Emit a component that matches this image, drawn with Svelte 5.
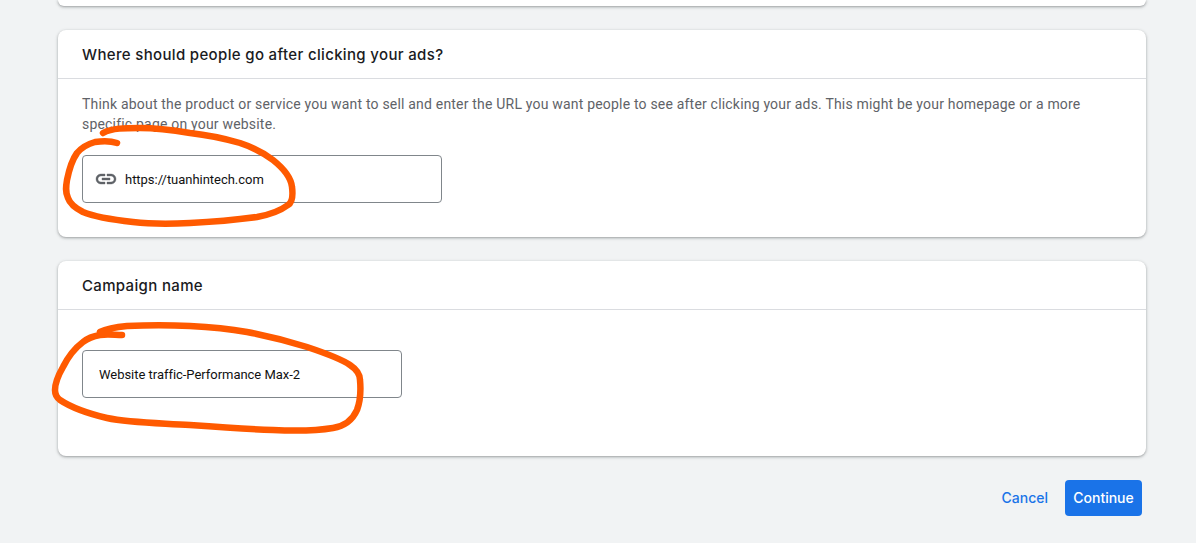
<script>
  let url = $state('https://tuanhintech.com');
  let campaign = $state('Website traffic-Performance Max-2');
</script>

<main class="page">
  <div class="card stub"></div>

  <section class="card">
    <h2>Where should people go after clicking your ads?</h2>
    <div class="body url-body">
      <p>Think about the product or service you want to sell and enter the URL you want people to see after clicking your ads. This might be your homepage or a more specific page on your website.</p>
      <label class="field url-field">
        <svg class="link-icon" viewBox="0 0 24 24" width="24" height="24" aria-hidden="true">
          <path d="M3.9 12c0-1.71 1.39-3.1 3.1-3.1h4V7H7c-2.76 0-5 2.24-5 5s2.24 5 5 5h4v-1.9H7c-1.71 0-3.1-1.39-3.1-3.1zM8 13h8v-2H8v2zm9-6h-4v1.9h4c1.71 0 3.1 1.39 3.1 3.1s-1.39 3.1-3.1 3.1h-4V17h4c2.76 0 5-2.24 5-5s-2.24-5-5-5z"/>
        </svg>
        <input bind:value={url} />
      </label>
    </div>
  </section>

  <section class="card">
    <h2>Campaign name</h2>
    <div class="body name-body">
      <label class="field name-field">
        <input bind:value={campaign} />
      </label>
    </div>
  </section>

  <div class="actions">
    <button class="cancel">Cancel</button>
    <button class="continue">Continue</button>
  </div>

  <!-- hand drawn marker circles on top of the form -->
  <svg class="marker" viewBox="0 0 1196 543" width="1196" height="543" aria-hidden="true">
    <path d="M103 133 C112 128 125 128 140 128 C158 128 172 130 190 133 C208 135 226 139 240 143 C252 147 264 153 273 160 C283 168 291 177 292 187 C293 195 293 202 288 205 C280 211 268 215 257 217 C235 220 212 222 190 223 C170 224 150 224 133 222 C115 220 95 217 83 212 C75 208 70 204 68 198 C65 192 66 186 67 180 C69 170 72 160 77 153 C82 147 88 144 95 142 C103 141 111 141 117 143"/>
    <path d="M100 332 C108 328 116 327 127 326 C148 325 170 325 190 326 C210 327 230 329 247 332 C268 336 288 341 307 347 C322 352 340 358 350 365 C356 369 360 374 360 380 C361 391 360 402 357 410 C353 419 345 426 333 428 C315 431 293 431 273 430 C245 429 217 427 190 425 C160 423 130 423 107 418 C90 414 72 408 60 400 C56 397 55 394 55 390 C55 382 59 374 63 367 C68 357 75 348 83 342 C88 338 94 336 100 335 C108 334 115 335 122 335"/>
  </svg>
</main>

<style>
  :global(body) {
    margin: 0;
    background: #f1f3f4;
    overflow: hidden;
  }

  .page {
    position: relative;
    width: 1196px;
    height: 543px;
    box-sizing: border-box;
    padding: 0 50px 0 58px;
    display: flex;
    flex-direction: column;
    gap: 24px;
    overflow: hidden;
    font-family: Roboto, "Liberation Sans", sans-serif;
  }

  .card {
    background: #fff;
    border-radius: 8px;
    box-shadow: 0 1px 2px rgba(60, 64, 67, 0.3), 0 1px 3px 1px rgba(60, 64, 67, 0.15);
  }

  .stub {
    height: 6px;
    border-radius: 0 0 8px 8px;
  }

  h2 {
    margin: 0;
    height: 48px;
    padding: 0 24px;
    display: flex;
    align-items: center;
    border-bottom: 1px solid #dadce0;
    font-family: Inter, Roboto, sans-serif;
    font-size: 15px;
    font-weight: 500;
    letter-spacing: 0.34px;
    color: #1a1b1e;
  }

  .body {
    padding: 0 24px;
  }

  .url-body {
    height: 158px;
    padding-top: 15px;
    box-sizing: border-box;
  }

  .name-body {
    height: 146px;
    padding-top: 40px;
    box-sizing: border-box;
  }

  p {
    margin: 0 0 21px;
    font-size: 14px;
    line-height: 20px;
    color: #5f6368;
    letter-spacing: 0.194px;
  }

  .field {
    height: 48px;
    box-sizing: border-box;
    display: flex;
    align-items: center;
    border: 1px solid #80868b;
    border-radius: 4px;
    background: #fff;
  }

  .url-field {
    width: 360px;
    padding-left: 11px;
    gap: 7px;
  }

  .name-field {
    width: 320px;
    padding-left: 16px;
  }

  .link-icon {
    fill: #5f6368;
    stroke: #5f6368;
    stroke-width: 0.4;
    flex: none;
  }

  input {
    flex: 1;
    min-width: 0;
    border: none;
    outline: none;
    padding: 0;
    background: transparent;
    font: 400 13px Roboto, "Liberation Sans", sans-serif;
    letter-spacing: -0.03px;
    color: #111;
  }

  .actions {
    display: flex;
    justify-content: flex-end;
    align-items: center;
    gap: 17px;
    padding-right: 4px;
  }

  button {
    border: none;
    font: 500 14px Inter, Roboto, sans-serif;
    cursor: pointer;
  }

  .cancel {
    padding: 0 0 1px;
    background: none;
    color: #1a73e8;
  }

  .continue {
    width: 77px;
    height: 36px;
    padding: 0 0 2px;
    border-radius: 4px;
    background: #1a73e8;
    color: #fff;
  }

  .marker {
    position: absolute;
    top: 0;
    left: 0;
    pointer-events: none;
  }

  .marker path {
    fill: none;
    stroke: #ff5a00;
    stroke-width: 6.5;
    stroke-linecap: round;
    stroke-linejoin: round;
  }
</style>
